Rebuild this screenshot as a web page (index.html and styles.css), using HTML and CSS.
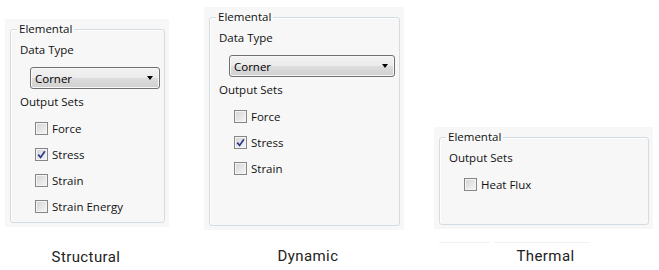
FILE: index.html
```html
<!DOCTYPE html>
<html lang="en">
<head>
    <meta charset="UTF-8">
    <meta name="viewport" content="width=device-width, initial-scale=1.0">
    <title>Elemental Output Sets</title>
    <link rel="stylesheet" href="styles.css">
</head>
<body>
    <div class="board">
        <div class="column col-structural">
            <div class="panel panel-structural">
                <fieldset class="group">
                    <legend>Elemental</legend>
                    <div class="group-body">
                        <div class="label">Data Type</div>
                        <div class="combo"><span>Corner</span><span class="arrow"></span></div>
                        <div class="label">Output Sets</div>
                        <ul class="checks">
                            <li><span class="box"></span>Force</li>
                            <li><span class="box checked"><svg viewBox="0 0 9 9" width="9" height="9"><path d="M1.2 4.6 L3.6 7.4 L7.9 1.2" fill="none" stroke="#2d3a8c" stroke-width="1.7"/></svg></span>Stress</li>
                            <li><span class="box"></span>Strain</li>
                            <li><span class="box"></span>Strain Energy</li>
                        </ul>
                    </div>
                </fieldset>
            </div>
            <div class="caption">Structural</div>
        </div>

        <div class="column col-dynamic">
            <div class="panel panel-dynamic">
                <fieldset class="group">
                    <legend>Elemental</legend>
                    <div class="group-body">
                        <div class="label">Data Type</div>
                        <div class="combo"><span>Corner</span><span class="arrow"></span></div>
                        <div class="label">Output Sets</div>
                        <ul class="checks">
                            <li><span class="box"></span>Force</li>
                            <li><span class="box checked"><svg viewBox="0 0 9 9" width="9" height="9"><path d="M1.2 4.6 L3.6 7.4 L7.9 1.2" fill="none" stroke="#2d3a8c" stroke-width="1.7"/></svg></span>Stress</li>
                            <li><span class="box"></span>Strain</li>
                        </ul>
                    </div>
                </fieldset>
            </div>
            <div class="caption">Dynamic</div>
        </div>

        <div class="column col-thermal">
            <div class="panel panel-thermal">
                <fieldset class="group">
                    <legend>Elemental</legend>
                    <div class="group-body">
                        <div class="label">Output Sets</div>
                        <ul class="checks">
                            <li><span class="box"></span>Heat Flux</li>
                        </ul>
                    </div>
                </fieldset>
            </div>
            <div class="rule"><span class="rule-a"></span><span class="rule-b"></span></div>
            <div class="caption">Thermal</div>
        </div>
    </div>
</body>
</html>
```

FILE: styles.css
```css
body {
    margin: 0;
    background: #ffffff;
    font-family: 'Open Sans', 'Noto Sans', sans-serif;
}

.board {
    display: flex;
    align-items: flex-start;
    padding-left: 5px;
}

.column {
    display: flex;
    flex-direction: column;
}
.col-structural {
    width: 164px;
}
.col-dynamic {
    width: 200px;
    margin-left: 35px;
}
.col-thermal {
    width: 219px;
    margin-left: 30px;
}

.panel {
    box-sizing: border-box;
    background: #f7f7f7;
    padding: 2px 4px 4px 5px;
}
.panel-structural {
    margin-top: 19px;
    height: 208px;
}
.panel-dynamic {
    margin-top: 7px;
    height: 223px;
}
.panel-thermal {
    margin-top: 127px;
    height: 102px;
}

.group {
    box-sizing: border-box;
    height: 100%;
    margin: 0;
    padding: 0;
    min-inline-size: 0;
    border: 1px solid #d3dce3;
    border-radius: 3px;
    box-shadow: inset 1px 1px 0 #ffffff;
}
.group legend {
    margin-left: 6px;
    padding: 0 2px;
    font-size: 11.5px;
    line-height: 16px;
    color: #111111;
}
.group-body {
    padding: 5px 0 0 9px;
}

.label {
    font-size: 11.5px;
    line-height: 16px;
    color: #111111;
}

.combo {
    display: flex;
    align-items: center;
    justify-content: space-between;
    box-sizing: border-box;
    height: 22px;
    margin: 9px 4px 5px 10px;
    padding: 0 6px 0 4px;
    border: 1px solid #707070;
    border-radius: 3px;
    background: linear-gradient(#f2f2f2, #ebebeb 50%, #dddddd 51%, #cfcfcf);
    box-shadow: inset 0 0 0 1px #f8f8f8;
    font-size: 11.5px;
    color: #000000;
}
.arrow {
    width: 0;
    height: 0;
    border-left: 3.5px solid transparent;
    border-right: 3.5px solid transparent;
    border-top: 4px solid #000000;
}

.checks {
    list-style: none;
    margin: 5px 0 0 0;
    padding: 0 0 0 15px;
}
.checks li {
    display: flex;
    align-items: center;
    height: 26px;
    font-size: 11.5px;
    color: #111111;
}

.box {
    box-sizing: border-box;
    display: flex;
    align-items: center;
    justify-content: center;
    width: 13px;
    height: 13px;
    margin-right: 4px;
    border: 1px solid #858686;
    background: linear-gradient(135deg, #d4d4d4, #f6f6f6);
    box-shadow: inset 0 0 0 1px #f4f4f4;
}

.caption {
    height: 20px;
    font-family: 'Roboto', 'Inter', sans-serif;
    font-size: 15px;
    line-height: 20px;
    letter-spacing: 0.4px;
    text-align: center;
    color: #222222;
}
.col-structural .caption {
    margin-top: 20px;
    padding-right: 2px;
}
.col-dynamic .caption {
    margin-top: 16px;
    padding-left: 8px;
}
.col-thermal .caption {
    margin-top: 3px;
    padding-left: 4px;
}

.rule {
    display: flex;
    height: 1px;
    margin-top: 13px;
}
.rule-a {
    width: 50px;
    margin-left: 5px;
    background: #f1f1f1;
}
.rule-b {
    width: 96px;
    margin-left: 5px;
    background: #f1f1f1;
}
```
